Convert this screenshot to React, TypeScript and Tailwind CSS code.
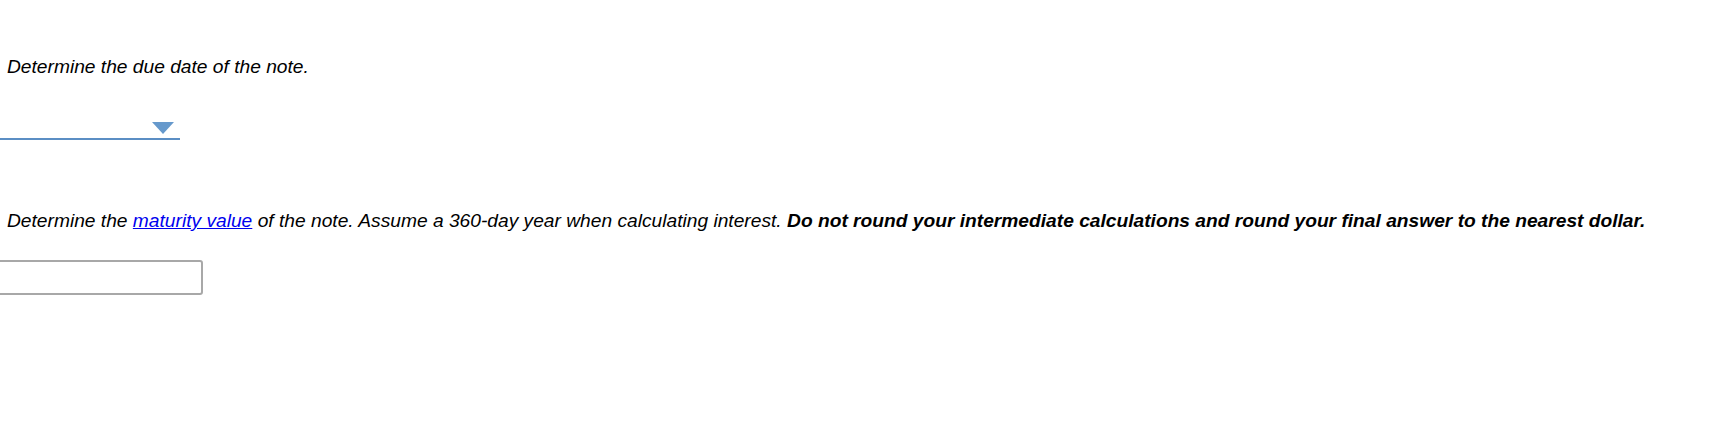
export default function App() {
  return (
    <div className="w-[1722px] h-[422px] bg-white overflow-hidden font-['Liberation_Sans',Arial,sans-serif] text-[19.2px] leading-[22px] text-black">
      {/* Due date question */}
      <p className="pt-[56px] pl-[7px] italic">Determine the due date of the note.</p>
      <div className="mt-[42px] w-[180px] h-[20px] border-b-2 border-[#5b8ec4] flex justify-end pr-[6px]">
        <svg width="22" height="12" viewBox="0 0 22 12" className="mt-[2px]">
          <polygon points="0,0 22,0 11,12" fill="#6699cc" />
        </svg>
      </div>

      {/* Maturity value question */}
      <p className="mt-[70px] pl-[7px] italic">
        Determine the{" "}
        <a href="#" className="text-[#0000ee] underline">
          maturity value
        </a>{" "}
        of the note. Assume a 360-day year when calculating interest.{" "}
        <strong className="font-bold">
          Do not round your intermediate calculations and round your final answer to the nearest dollar.
        </strong>
      </p>
      <div className="mt-[28px] -ml-[20px] w-[223px] h-[35px] border-2 border-[#a8a8a8] rounded-[3px]" />
    </div>
  );
}
